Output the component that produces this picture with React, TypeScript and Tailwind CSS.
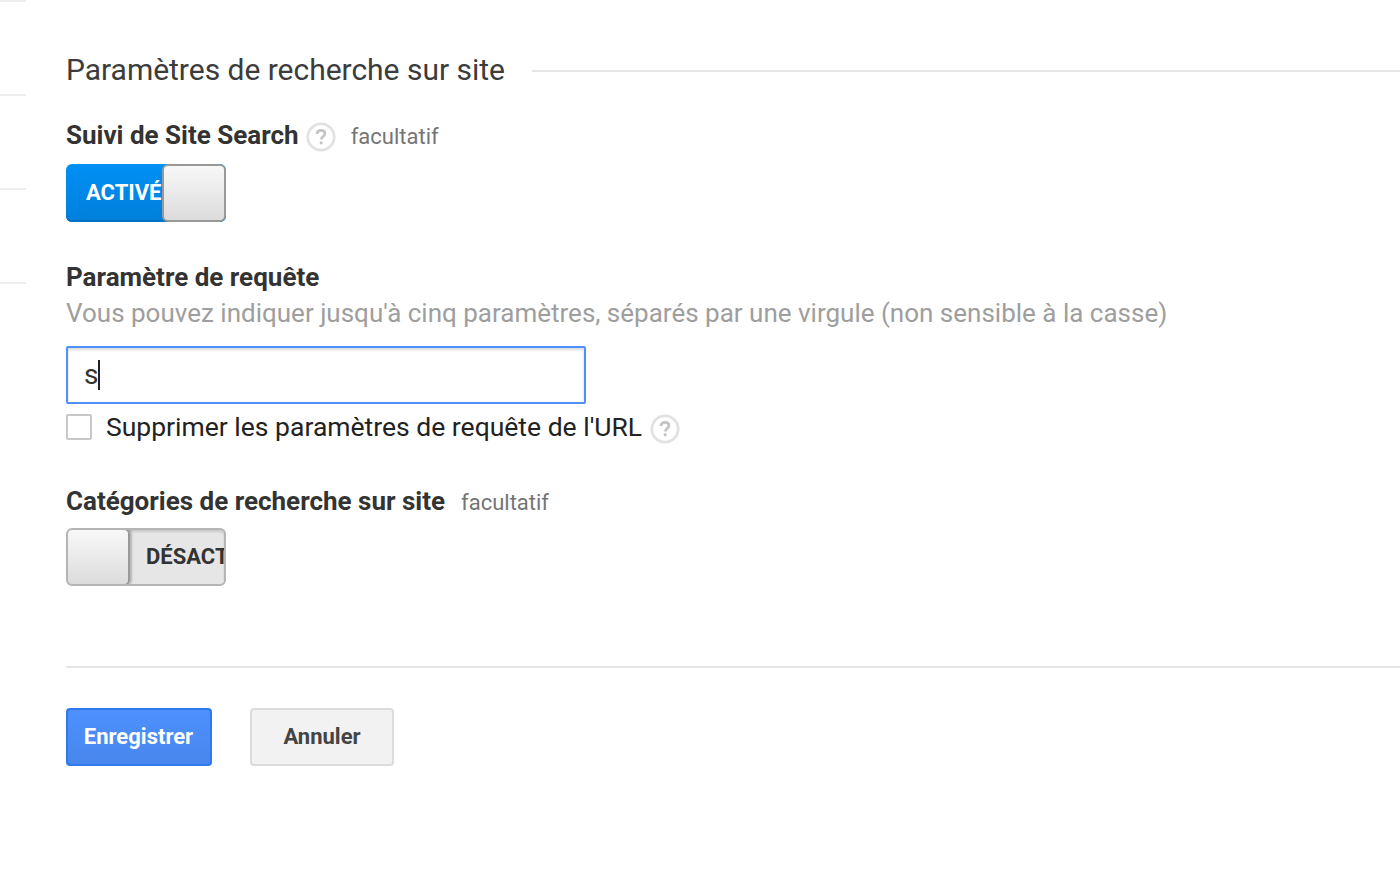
function Help() {
  return (
    <svg width="30" height="30" viewBox="0 0 30 30" className="shrink-0">
      <circle cx="15" cy="15" r="13.2" fill="#fff" stroke="#e2e2e2" strokeWidth="2.8" />
      <path d="M11 12c.2-2.3 1.8-3.6 4-3.6 2.3 0 3.9 1.3 3.9 3.2 0 1.5-.9 2.3-1.9 3-1.1.8-1.6 1.4-1.6 2.7v.3" fill="none" stroke="#c4c4c4" strokeWidth="2.7" />
      <rect x="13.8" y="19.4" width="2.8" height="2.8" fill="#c4c4c4" />
    </svg>
  );
}

export default function App() {
  return (
    <div className="flex h-[872px] w-[1400px] overflow-hidden bg-white font-['Roboto',sans-serif] text-[#333]">
      <div className="flex w-[26px] shrink-0 flex-col">
        <div className="h-[2px] bg-[#eeeeee]" />
        <div className="mt-[92px] h-[2px] bg-[#eeeeee]" />
        <div className="mt-[92px] h-[2px] bg-[#eeeeee]" />
        <div className="mt-[92px] h-[2px] bg-[#eeeeee]" />
      </div>
      <div className="flex min-w-0 flex-1 flex-col pl-[40px]">
        <div className="mt-[50px] flex h-[40px] items-center">
          <h1 className="whitespace-nowrap text-[30px] leading-[40px] font-normal tracking-[-0.02px] text-[#3c3c3c]">Paramètres de recherche sur site</h1>
          <div className="ml-[27px] mt-[2px] h-[2px] flex-1 bg-[#e5e5e5]" />
        </div>

        <div className="mt-[30px] flex h-[30px] items-center">
          <span className="text-[26px] leading-[30px] font-bold whitespace-nowrap">Suivi de Site Search</span>
          <span className="ml-[7px] mt-[4px]"><Help /></span>
          <span className="ml-[15px] mt-[3px] text-[22px] leading-[30px] text-[#757575]">facultatif</span>
        </div>

        <div className="relative mt-[14px] flex h-[58px] w-[160px] overflow-hidden rounded-[6px] bg-gradient-to-b from-[#0090f5] to-[#007fdb] shadow-[inset_0_-2px_0_#0070c4]">
          <span className="ml-[20px] mt-[15px] text-[22px] leading-[28px] font-bold whitespace-nowrap text-white">ACTIVÉ</span>
          <div className="absolute right-0 top-0 h-[58px] w-[64px] rounded-[6px] border-2 border-[#999] bg-gradient-to-b from-[#f8f8f8] to-[#dcdcdc]" />
        </div>

        <div className="mt-[40px] text-[26px] leading-[30px] font-bold">Paramètre de requête</div>
        <div className="mt-[6px] text-[26px] leading-[30px] font-normal whitespace-nowrap text-[#9e9e9e]">Vous pouvez indiquer jusqu'à cinq paramètres, séparés par une virgule (non sensible à la casse)</div>

        <div className="mt-[18px] flex h-[58px] w-[520px] items-center rounded-[2px] border-2 border-[#4d90fe] pl-[16px] shadow-[inset_0_2px_3px_rgba(0,0,0,0.15)]">
          <span className="text-[28px] leading-[34px] text-[#333]">s</span>
          <span className="h-[30px] w-[2px] bg-[#222]" />
        </div>

        <div className="mt-[8px] flex h-[30px] items-center">
          <span className="h-[26px] w-[26px] shrink-0 rounded-[2px] border-2 border-[#c8c8c8] bg-white" />
          <span className="ml-[14px] text-[26.5px] leading-[30px] whitespace-nowrap text-[#222]">Supprimer les paramètres de requête de l'URL</span>
          <span className="ml-[8px] mt-[3px]"><Help /></span>
        </div>

        <div className="mt-[44px] flex h-[30px] items-center">
          <span className="text-[26px] leading-[30px] font-bold whitespace-nowrap">Catégories de recherche sur site</span>
          <span className="ml-[16px] mt-[3px] text-[22px] leading-[30px] text-[#757575]">facultatif</span>
        </div>

        <div className="relative mt-[12px] flex h-[58px] w-[160px] overflow-hidden rounded-[6px] border-2 border-[#b5b5b5] bg-[#e6e6e6] shadow-[inset_0_2px_2px_rgba(0,0,0,0.12)]">
          <span className="ml-[78px] mt-[13px] text-[22px] leading-[28px] font-bold whitespace-nowrap text-[#333]">DÉSACTIVÉ</span>
          <div className="absolute -left-[2px] -top-[2px] h-[58px] w-[64px] rounded-[6px] border-2 border-[#999] bg-gradient-to-b from-[#f8f8f8] to-[#dcdcdc] shadow-[2px_0_2px_rgba(0,0,0,0.2)]" />
        </div>

        <div className="mt-[80px] h-[2px] bg-[#e5e5e5]" />

        <div className="mt-[40px] flex gap-[38px]">
          <button className="h-[58px] w-[146px] rounded-[4px] border-2 border-[#3079ed] bg-gradient-to-b from-[#4d90fe] to-[#4787ed] pb-[2px] pr-[1px] text-[22px] font-bold text-white">Enregistrer</button>
          <button className="h-[58px] w-[144px] rounded-[4px] border-2 border-[#dcdcdc] bg-[#f2f2f2] pb-[2px] text-[22px] font-bold text-[#444]">Annuler</button>
        </div>
      </div>
    </div>
  );
}
